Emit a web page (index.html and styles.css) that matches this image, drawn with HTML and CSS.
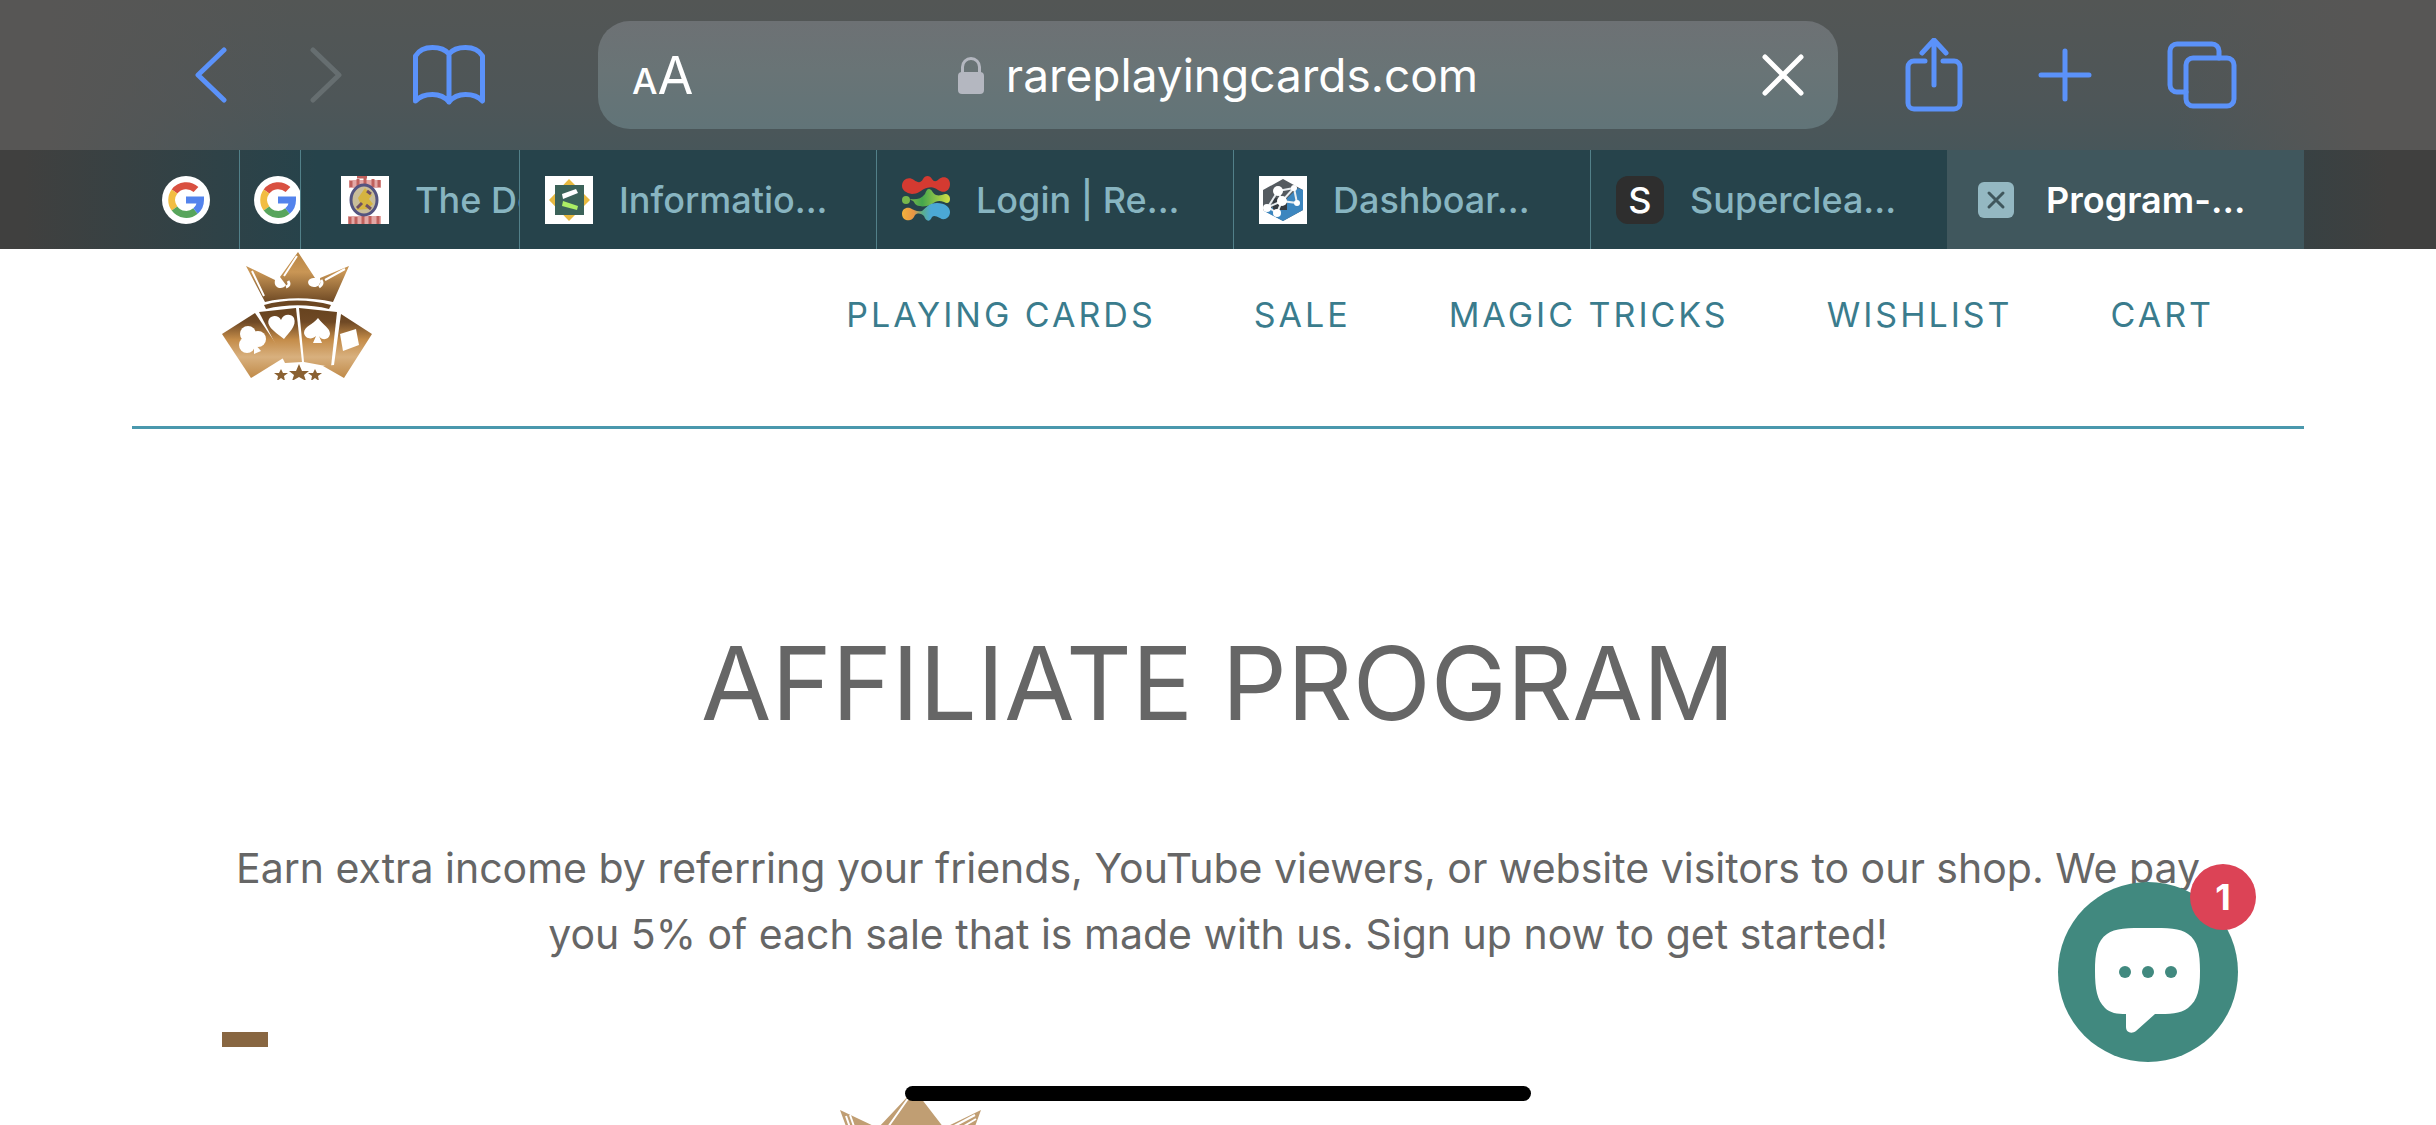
FILE: index.html
```html
<!DOCTYPE html>
<html lang="en">
<head>
<meta charset="utf-8">
<title>Program - Rare Playing Cards</title>
<link rel="stylesheet" href="styles.css">
</head>
<body>
<div class="browser">
  <div class="toolbar">
    <div class="tools tools-left">
      <button class="tool" aria-label="Back"><svg width="32" height="56" viewBox="0 0 32 56"><path d="M29 3 3 28l26 25"/></svg></button>
      <button class="tool tool-off" aria-label="Forward" disabled><svg width="32" height="56" viewBox="0 0 32 56"><path d="m3 3 26 25L3 53"/></svg></button>
      <button class="tool" aria-label="Bookmarks"><svg width="72" height="60" viewBox="0 0 72 60"><path d="M36 9C32 4 26 2.500 19.500 2.500S6 5 2.500 11v45C7 51 12 49.500 19.500 49.500S32 52 36 57c4-5 9-7.500 16.500-7.500S65 51 69.500 56V11C66 5 59 2.500 52.500 2.500S40 4 36 9v48"/></svg></button>
    </div>
    <div class="address">
      <button class="text-size" aria-label="Text size"><span class="small-a">A</span>A</button>
      <div class="site">
        <svg width="26" height="37" viewBox="0 0 26 37"><path d="M4.500 17v-7a8.500 8.500 0 0 1 17 0v7" fill="none" stroke="#b4b7c0" stroke-width="3"/><rect y="15" width="26" height="22" rx="4" fill="#b4b7c0"/></svg>
        <span>rareplayingcards.com</span>
      </div>
      <button class="stop" aria-label="Stop loading"><svg width="42" height="42" viewBox="0 0 42 42"><path d="m3 3 36 36M39 3 3 39"/></svg></button>
    </div>
    <div class="tools tools-right">
      <button class="tool" aria-label="Share"><svg width="58" height="74" viewBox="0 0 58 74"><path d="M20 23H9a6 6 0 0 0-6 6v36a6 6 0 0 0 6 6h40a6 6 0 0 0 6-6V29a6 6 0 0 0-6-6H38M29 47V3M17 15 29 2l12 13"/></svg></button>
      <button class="tool" aria-label="New tab"><svg width="54" height="54" viewBox="0 0 54 54"><path d="M27 3v48M3 27h48"/></svg></button>
      <button class="tool" aria-label="Show tabs"><svg width="70" height="68" viewBox="0 0 70 68"><rect x="19" y="17" width="48" height="48" rx="7"/><path d="M19 51h-9a7 7 0 0 1-7-7V10a7 7 0 0 1 7-7h35a7 7 0 0 1 7 7v7"/></svg></button>
    </div>
  </div>
  <nav class="tabs" aria-label="Open tabs">
    <a class="tab tab-first" href="#" aria-label="Google"><svg class="favicon" viewBox="0 0 48 48"><use href="#google"/></svg></a>
    <a class="tab tab-sliver" href="#" aria-label="Google"><svg class="favicon" viewBox="0 0 48 48"><use href="#google"/></svg></a>
    <a class="tab tab-cut" href="#"><svg class="favicon" viewBox="0 0 48 48"><rect width="48" height="48" fill="#fff"/><path d="M8 4h32v8H8zM7 40h33v8H7z" fill="#e3a8a6"/><path d="M16 1h10M10 5v6m7-8v8m7-9v8m8-7v8m6-7v7M9 41v7m6-7v7m7-8v8m7-8v8m8-8v8" stroke="#c0605c" stroke-width="3"/><ellipse cx="23" cy="24" rx="13" ry="15" fill="#c9bd9a" stroke="#545480" stroke-width="3"/><path d="m24 12 7 7-3 4 4 5-6 5-11 1 4-7-2-5z" fill="#d5b440"/><path d="m16 32 5-5m9 6-5-4m1-14 4 3" stroke="#6f5064" stroke-width="3" fill="none"/></svg><span>The Do</span></a>
    <a class="tab" href="#"><svg class="favicon" viewBox="0 0 48 48"><rect width="48" height="48" fill="#fff"/><path d="M24 3 45 24 24 45 4 24z" fill="#e7b93f"/><path d="M10 9h29v30H10z" fill="#3b6259"/><path d="m17 18 14-5 2 4-15 6z" fill="#fff"/><path d="m18 25 15 5-1 4-15-4z" fill="#acee65"/></svg><span>Informatio...</span></a>
    <a class="tab" href="#"><svg class="favicon" viewBox="0 0 48 48"><defs><linearGradient id="leaf"><stop offset="0" stop-color="#78b74b"/><stop offset=".3" stop-color="#44a64d"/><stop offset="1" stop-color="#d1df45"/></linearGradient><linearGradient id="wave"><stop offset="0" stop-color="#f2b23c"/><stop offset=".25" stop-color="#e99545"/><stop offset=".42" stop-color="#5caf86"/><stop offset=".6" stop-color="#4ba8d5"/></linearGradient></defs><path d="M0 10C0 3 7 0 12 4c4 3 7 3 9-1 2-4 7-4 9 0 2 3 4 3 7 0 5-4 11-1 11 5 0 7-6 10-12 6-5-4-9-3-14-1-4 2-6 5-12 5-6-1-10-4-10-8z" fill="#d43a31"/><circle cx="4" cy="24" r="4" fill="#78b74b"/><path d="M8 23c6 1 11 0 15-5 1-3 2-5 4-5 3 0 3 4 7 6 3 1 6 0 9-1 3 0 5 2 5 5 0 4-3 5-6 3-5-2-8-1-12 2-5 3-16 4-18-2-1-2-3-1-4-3z" fill="url(#leaf)"/><path d="M0 38c0-5 4-7 8-6 4 2 7 4 12 3 5-4 7-8 15-8 8 0 13 4 13 9 0 6-6 9-10 6-4-2-6-3-8-1-2 5-6 5-8-1-4-3-6-3-9-1-2 5-6 6-9 5-3-1-4-4-4-6z" fill="url(#wave)"/></svg><span>Login | Re...</span></a>
    <a class="tab" href="#"><svg class="favicon" viewBox="0 0 48 48"><rect width="48" height="48" fill="#fff"/><path d="m24 3 20 11v20L24 45 4 34V14z" fill="#555b60"/><path d="M39 12 44 14v20L24 45 5 35l17-7z" fill="#3c86bf"/><path d="M14 22h14v12H14z" fill="#343a40"/><path d="M19 15 35 12 38 27 23 25 19 15 9 31l9 6 5-12 12-13M7 32l16-7" fill="none" stroke="#e8edf0" stroke-width="2"/><g fill="#fff"><circle cx="19" cy="15" r="5"/><circle cx="35" cy="12" r="3"/><circle cx="38" cy="27" r="3"/><circle cx="23" cy="25" r="5"/><circle cx="8" cy="32" r="4"/><circle cx="18" cy="37" r="4"/></g></svg><span>Dashboar...</span></a>
    <a class="tab" href="#"><span class="favicon letter">S</span><span>Superclea...</span></a>
    <div class="tab tab-active" aria-current="page"><button class="close" aria-label="Close tab"><svg width="36" height="36" viewBox="0 0 36 36"><rect width="36" height="36" rx="6" fill="#94b8c2"/><path d="m11 11 14 14m0-14L11 25" stroke="#40575d" stroke-width="3" stroke-linecap="round"/></svg></button><span>Program-...</span></div>
  </nav>
</div>

<header class="header">
  <a class="brand" href="#" aria-label="Rare Playing Cards">
    <svg width="150" height="130" viewBox="0 0 150 130"><use href="#crown"/>
      <g fill="url(#cards)">
        <path d="M0 84 33 63 63 107 29 128z"/><path d="m37 62 37-4 6 54-17 1z"/><path d="m77 58 38 4-6 55-27-5z"/><path d="m119 64 31 20-28 44-21-12 11-1z"/>
      </g>
      <g fill="#fff">
        <circle cx="26" cy="84" r="8"/><circle cx="25" cy="95" r="8"/><circle cx="36" cy="89" r="8"/><path d="m32 93 7 8-7 3z"/>
        <path d="M62 89C50 80 44 75 47 69c4-5 10-3 12 1 2-6 10-7 13-2 3 8-5 14-10 21z"/>
        <path d="M96 68c6 8 12 10 12 16-1 6-8 7-11 2l3 7h-9l3-7c-4 4-11 3-12-3 0-7 9-8 14-15z"/>
        <path d="m118 84 16-5 3 16-16 6z"/>
      </g>
      <path d="m77 114 3 7h7l-5 4 2 6-7-4-7 4 2-6-5-4h7zM59 119l2 4h5l-4 3 1 5-4-3-4 3 1-5-4-3h5zM93 119l2 4h5l-4 3 1 5-4-3-4 3 1-5-4-3h5z" fill="#8a6132"/>
    </svg>
  </a>
  <nav class="menu">
    <a href="#">PLAYING CARDS</a><a href="#">SALE</a><a href="#">MAGIC TRICKS</a><a href="#">WISHLIST</a><a href="#">CART</a>
  </nav>
</header>

<main class="content">
  <h1>AFFILIATE PROGRAM</h1>
  <p>Earn extra income by referring your friends, YouTube viewers, or website visitors to our shop. We pay you 5% of each sale that is made with us. Sign up now to get started!</p>
  <div class="progress"></div>
  <svg class="loader" width="150" height="80" viewBox="0 0 150 80"><path d="m4 19 38 18L75 2h6l27 35 37-18-22 60H26z" fill="#c09e73"/><path d="m10 25 14 40M14 24l14 40M52 36 76 2M139 24l-30 16M140 28l-24 14" stroke="#fff" stroke-width="2" fill="none"/></svg>
</main>

<button class="chat" aria-label="Open chat, 1 new message">
  <svg width="106" height="106" viewBox="0 0 106 106"><path d="M53 0c20 0 32 0 40 6 10 7 12 19 12 37s-2 29-12 37c-8 6-18 6-33 6l-19 17c-4 3-10 2-10-4V86c-9 0-16-1-21-6C2 72 0 61 0 43S2 13 12 6C20 0 33 0 53 0z" fill="#fff"/><g fill="#41897f"><circle cx="30" cy="44" r="6"/><circle cx="53" cy="44" r="6"/><circle cx="76" cy="44" r="6"/></g></svg>
  <span class="badge">1</span>
</button>
<div class="home-indicator"></div>

<svg class="symbols" aria-hidden="true">
  <defs>
    <linearGradient id="gold" x1="0" y1="0" x2="0" y2="1"><stop offset="0" stop-color="#b98645"/><stop offset=".4" stop-color="#c99655"/><stop offset="1" stop-color="#6f4a25"/></linearGradient>
    <linearGradient id="cards" gradientUnits="userSpaceOnUse" x1="0" y1="58" x2="0" y2="128"><stop offset="0" stop-color="#67431f"/><stop offset=".2" stop-color="#6f4925"/><stop offset=".45" stop-color="#c48c49"/><stop offset=".7" stop-color="#d8b07e"/><stop offset="1" stop-color="#c08a48"/></linearGradient>
    <g id="crown">
      <path d="M24 16 53 30c-2 9 8 10 11 5L58 27 76 2l17 26c-10 0-8 9-1 9 5 0 7-4 6-9l29-12-16 36c-22-5-48-5-68 0z" fill="url(#gold)"/>
      <path d="M42 55c20-6 46-6 67 0l-2 4c-19-5-43-5-63 0z" fill="#6b4622"/>
      <path d="m30 21 12 25M62 26 75 6M103 30l20-11" stroke="#fff" stroke-width="2" fill="none"/>
      <path d="M66 31c2 3 1 5-2 6m35-7c2 3 1 5-2 7" stroke="#fff" stroke-width="3" fill="none"/>
    </g>
    <g id="google">
      <circle cx="24" cy="24" r="24" fill="#fff"/>
      <g fill="none" stroke-width="7"><path d="M12.500 15.500A14.500 14.500 0 0 1 34 13.500" stroke="#d95040"/><path d="M12.500 15.500a14.500 14.500 0 0 0 0 17" stroke="#f2bd42"/><path d="M12.500 32.500A14.500 14.500 0 0 0 33.500 35" stroke="#58a55c"/><path d="M24 24h14.500c0 5-2 8.500-5 11" stroke="#5383ec"/></g>
    </g>
  </defs>
</svg>
</body>
</html>
```
FILE: styles.css
```css
* { box-sizing: border-box; }
body {
  margin: 0;
  min-height: 100vh;
  overflow: hidden;
  background: #fff;
  color: #666;
  font-family: Inter, "Liberation Sans", sans-serif;
}
a { color: inherit; text-decoration: none; }
button { padding: 0; border: 0; background: none; color: inherit; font: inherit; }
svg { display: block; flex: none; }
.symbols { position: absolute; width: 0; height: 0; }

/* Browser chrome */
.browser {
  background:
    linear-gradient(90deg, #575655 2%, transparent 12%, transparent 89%, #575655 97%),
    linear-gradient(#535655, #4e5658 40%, #43565b 75%, #40575d);
}
.toolbar { display: flex; align-items: center; height: 150px; padding: 0 199px 0 195px; }
.tools { display: flex; align-items: center; }
.tools-left { gap: 83px; width: 403px; }
.tools-left .tool:last-child { margin-left: -12px; }
.tools-right { justify-content: space-between; width: 399px; padding-left: 67px; }
.tool svg { fill: none; stroke: #5b92fa; stroke-width: 5; stroke-linecap: round; stroke-linejoin: round; }
.tool-off svg { stroke: #666e70; }
.address {
  display: grid;
  flex: 1;
  grid-template-columns: 1fr auto 1fr;
  align-items: center;
  height: 108px;
  padding: 0 34px;
  border-radius: 32px;
  background: linear-gradient(#6d7174, #697476 45%, #617478);
  color: #fff;
}
.text-size { justify-self: start; font-size: 52px; }
.small-a { font-size: 36px; font-weight: 500; }
.site { display: flex; align-items: center; gap: 22px; font-size: 46px; }
.stop { justify-self: end; }
.stop svg { fill: none; stroke: #fff; stroke-width: 5; stroke-linecap: round; }

.tabs {
  display: grid;
  grid-template-columns: 107px 61px 219px repeat(5, minmax(0, 1fr));
  height: 99px;
  padding: 0 132px;
  background: linear-gradient(90deg, #40403f 1%, #26434b 13%, #26434b 87%, #40403f 98%);
}
.tab {
  display: flex;
  align-items: center;
  gap: 26px;
  overflow: hidden;
  padding-left: 25px;
  border-left: 1px solid #528089;
  color: #88b5c1;
  font-size: 36px;
  font-weight: 500;
  white-space: nowrap;
}
.tab-first { padding-left: 30px; border: 0; }
.tab-sliver { padding-left: 14px; }
.tab-cut { padding-left: 40px; }
.tab-active { gap: 32px; padding-left: 31px; border: 0; background: #40575d; color: #fff; font-weight: 600; }
.favicon { flex: none; width: 48px; height: 48px; }
.letter { border-radius: 12px; background: #2e2e2e; color: #fff; line-height: 48px; text-align: center; }

/* Shop header */
.header {
  display: flex;
  justify-content: space-between;
  height: 180px;
  margin: 0 132px;
  padding: 1px 90px 0;
  border-bottom: 3px solid #4a98ad;
}
.menu { display: flex; gap: 98px; padding-top: 45px; color: #3a7c8d; font-size: 34px; line-height: 40px; letter-spacing: 3px; }

/* Page content */
.content { padding: 192px 222px 0; text-align: center; }
h1 { margin: 0; font-size: 102px; font-weight: 400; line-height: 124px; }
p { margin: 90px 0 0; font-size: 41px; line-height: 66px; }
.progress { width: 46px; height: 15px; margin-top: 65px; background: #886641; }
.loader { margin: 44px 0 0 614px; }

/* Floating items */
.chat {
  position: fixed;
  right: 198px;
  bottom: 63px;
  display: grid;
  place-items: center;
  width: 180px;
  height: 180px;
  padding-top: 17px;
  border-radius: 50%;
  background: #41897f;
}
.badge {
  position: absolute;
  top: -18px;
  right: -18px;
  width: 66px;
  height: 66px;
  border-radius: 50%;
  background: #dc4356;
  color: #fff;
  font-size: 36px;
  font-weight: 700;
  line-height: 66px;
}
.home-indicator {
  position: fixed;
  bottom: 24px;
  left: 50%;
  width: 626px;
  height: 15px;
  margin-left: -313px;
  border-radius: 8px;
  background: #000;
}
```
